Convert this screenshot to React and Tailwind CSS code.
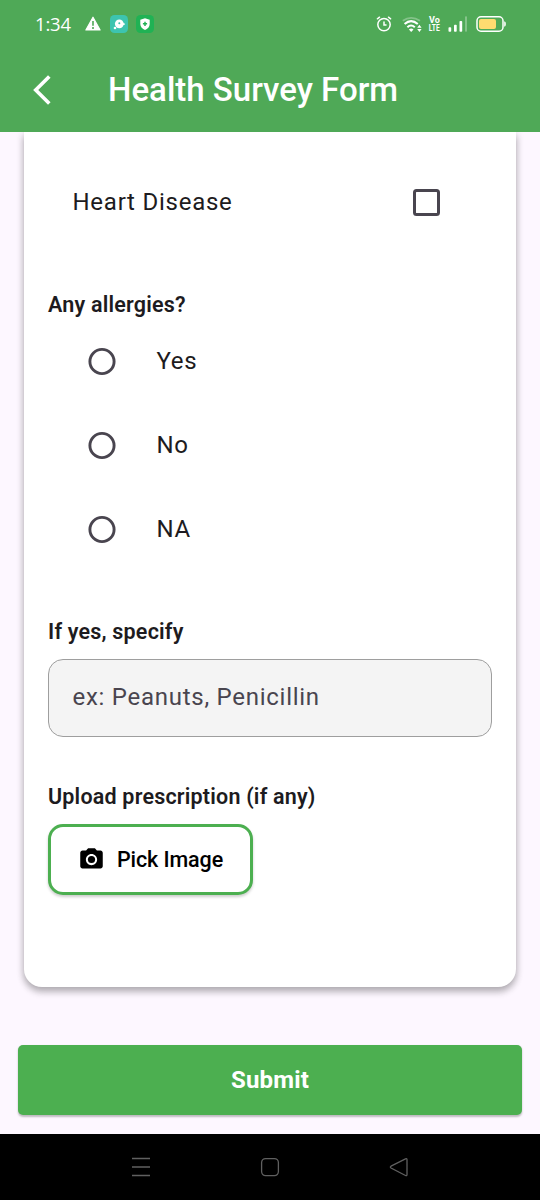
import React from "react";

function StatusBar() {
  return (
    <div className="flex h-12 items-center pl-[35px] pr-[33px] text-white">
      <span className="w-[37px] whitespace-nowrap font-['Open_Sans',sans-serif] text-[18.500px] leading-6 tracking-[-0.2px]">1:34</span>
      <svg className="ml-[12px] h-[18px] w-[18px]" viewBox="0 0 18 18">
        <path d="M9 2.200 16.100 15H1.900Z" fill="#fff" stroke="#fff" strokeWidth="1.200" strokeLinejoin="round" />
        <path d="M9 6v4.800M9 12v2" stroke="#4fa957" strokeWidth="1.600" />
      </svg>
      <svg className="ml-[8px] h-[18px] w-[18px]" viewBox="0 0 18 18">
        <rect width="18" height="18" rx="4.500" fill="#3dc4af" />
        <circle cx="9.300" cy="8.800" r="4.400" fill="#fff" />
        <path d="m12.500 9 1.500.2" stroke="#fff" strokeWidth="1.700" strokeLinecap="round" />
        <circle cx="5" cy="13" r="1.300" fill="#fff" />
        <circle cx="9.300" cy="8.300" r="1" fill="#3dc4af" />
      </svg>
      <svg className="ml-[8px] h-[18px] w-[18px]" viewBox="0 0 18 18">
        <rect width="18" height="18" rx="4.500" fill="#20b254" />
        <path d="m9 3.300 4.700 1.500v4.100c0 3-2.100 4.700-4.700 6-2.600-1.300-4.700-3-4.700-6V4.800Z" fill="#fff" />
        <path d="M9 6.700v4.200M6.900 8.800h4.200" stroke="#20b254" strokeWidth="1.500" />
      </svg>
      <div className="flex-1" />
      <svg className="h-[18px] w-[18px]" viewBox="0 0 18 18" fill="none" stroke="#fff" strokeWidth="1.500" strokeLinecap="round">
        <circle cx="9" cy="9.600" r="6.200" />
        <path d="M9 7v3h2M2.400 3.800 4.500 2.200M15.600 3.800l-2.100-1.600" />
      </svg>
      <svg className="ml-[9px] h-[20px] w-[22px]" viewBox="0 0 22 20" fill="none" strokeLinecap="butt">
        <path d="M.8 6.800Q9 .8 18 6.800" stroke="#fff" strokeOpacity=".3" strokeWidth="1.700" />
        <path d="M2.600 10Q9 4.400 15.800 10M5.400 13.200Q9 9.800 12.800 13.200" stroke="#fff" strokeWidth="2.100" />
        <path d="m6.900 15.600 2.300 2.300 2.300-2.300Q9.200 13.600 6.900 15.600Z" fill="#fff" />
        <path d="m15.200 13.700 2.200-2.900 2.200 2.900ZM15.200 15l2.200 2.900 2.200-2.900Z" fill="#fff" />
      </svg>
      <div className="ml-[4px] flex w-[13px] flex-col items-center font-['Roboto',sans-serif] text-[9px] font-bold leading-[8px]">
        <span>Vo</span>
        <span className="scale-x-[0.75]">LTE</span>
      </div>
      <svg className="ml-[7px] h-[18px] w-[20px]" viewBox="0 0 20 18" fill="#fff">
        <rect x="0.500" y="12.300" width="2.700" height="4.400" rx=".8" />
        <rect x="6" y="9.800" width="2.700" height="6.900" rx=".8" />
        <rect x="11.500" y="6" width="2.700" height="10.700" rx=".8" />
        <rect x="17" y="1.300" width="2" height="15.400" rx=".8" opacity=".3" />
      </svg>
      <svg className="ml-[8px] h-[18px] w-[31px]" viewBox="0 0 31 18">
        <rect x="1" y="1.800" width="26" height="14.400" rx="4" fill="none" stroke="#fff" strokeWidth="1.500" />
        <rect x="3" y="4" width="17" height="10" rx="2" fill="#ffdc70" />
        <path d="M28.200 6.200q1.700.3 1.700 2.800t-1.700 2.800Z" fill="#fff" />
      </svg>
    </div>
  );
}

function SectionTitle({ children }) {
  return <h2 className="h-[30px] text-[21.500px] font-semibold leading-[32px] tracking-[0.200px]">{children}</h2>;
}

function RadioOption({ label }) {
  return (
    <label className="flex h-[84px] items-center pl-[39px]">
      <svg className="h-[30px] w-[30px]" viewBox="0 0 30 30">
        <circle cx="15" cy="15.500" r="12.100" fill="none" stroke="#49454f" strokeWidth="2.900" />
      </svg>
      <span className="ml-[39.500px] text-[24px] leading-9 tracking-[0.70px]">{label}</span>
    </label>
  );
}

function NavigationBar() {
  return (
    <nav className="flex h-[66px] items-center justify-center gap-[105px] bg-black">
      <svg className="h-6 w-6" viewBox="0 0 24 24" fill="none" stroke="#606060" strokeWidth="1.500">
        <path d="M3 3.500h18M3 12h18M3 20.500h18" />
      </svg>
      <svg className="h-6 w-6" viewBox="0 0 24 24" fill="none" stroke="#606060" strokeWidth="1.300">
        <rect x="3.600" y="3.600" width="16.800" height="17" rx="4" />
      </svg>
      <svg className="h-6 w-6" viewBox="0 0 24 24" fill="none" stroke="#606060" strokeWidth="1.300">
        <path d="M4 11.200 18.500 3.800Q20 3.200 20 4.800v14.800q0 1.600-1.500.9L4 13q-1.300-.9 0-1.800Z" />
      </svg>
    </nav>
  );
}

export default function App() {
  return (
    <div className="flex h-[1200px] w-[540px] flex-col overflow-hidden bg-[#fdf7ff] font-['Roboto',sans-serif] text-[#1d1b20]">
      <header className="h-[132px] shrink-0 bg-[#4fa957] text-white">
        <StatusBar />
        <div className="flex h-[84px] items-center pl-[30px]">
          <svg className="h-9 w-6" viewBox="0 0 24 36" fill="none" stroke="#fff" strokeWidth="3.600">
            <path d="M19.300 4.400 5.700 18 19.300 31.600" />
          </svg>
          <h1 className="ml-[54px] whitespace-nowrap text-[33px] font-medium leading-10">Health Survey Form</h1>
        </div>
      </header>

      <main className="h-[913px] overflow-hidden px-6">
        <section className="flex h-[855px] flex-col rounded-b-[18px] bg-white px-6 shadow-[0_5px_7px_rgba(0,0,0,0.24),0_1px_8px_rgba(0,0,0,0.15)]">
          <label className="flex h-[140px] items-center justify-between pl-[24.500px] pr-[52.500px]">
            <span className="text-[24px] leading-9 tracking-[0.75px]">Heart Disease</span>
            <svg className="h-[27px] w-[27px]" viewBox="0 0 27 27" overflow="visible">
              <rect x="1.500" y="1.500" width="24" height="24" rx="2" fill="none" stroke="#49454f" strokeWidth="3" />
            </svg>
          </label>
          <div className="mt-[17px]"><SectionTitle>Any allergies?</SectionTitle></div>
          <RadioOption label="Yes" />
          <RadioOption label="No" />
          <RadioOption label="NA" />
          <div className="mt-[45px]"><SectionTitle>If yes, specify</SectionTitle></div>
          <input
            className="mt-[12.500px] h-[78px] w-full shrink-0 rounded-[15px] border-[1.500px] border-[#9e9e9e] bg-[#f4f4f4] px-[23.500px] pb-[1px] text-[24px] tracking-[0.73px] placeholder:text-[#49454f] placeholder:opacity-100"
            placeholder="ex: Peanuts, Penicillin"
          />
          <div className="mt-[44.500px]"><SectionTitle>Upload prescription (if any)</SectionTitle></div>
          <button className="mt-[12.500px] flex h-[71px] w-[205px] items-center rounded-[15px] border-3 border-[#4caf50] bg-white pl-[27px] text-[21.500px] font-medium text-black shadow-[0_2px_3px_rgba(0,0,0,0.2)]">
            <svg className="h-[27px] w-[27px]" viewBox="0 0 24 24" fill="currentColor">
              <circle cx="12" cy="12" r="3.200" />
              <path d="M9 2 7.170 4H4c-1.100 0-2 .9-2 2v12c0 1.100.9 2 2 2h16c1.100 0 2-.9 2-2V6c0-1.100-.9-2-2-2h-3.170L15 2H9Zm3 15c-2.760 0-5-2.240-5-5s2.240-5 5-5 5 2.240 5 5-2.240 5-5 5Z" />
            </svg>
            <span className="ml-3 whitespace-nowrap pt-[3px] tracking-[-0.1px]">Pick Image</span>
          </button>
        </section>
      </main>

      <div className="h-[89px] shrink-0 px-[18px]">
        <button className="h-[70px] w-full rounded-[5px] bg-[#4caf50] text-[24px] font-bold tracking-[0.15px] text-white shadow-[0_1.500px_2px_rgba(0,0,0,0.25)]">Submit</button>
      </div>
      <NavigationBar />
    </div>
  );
}
